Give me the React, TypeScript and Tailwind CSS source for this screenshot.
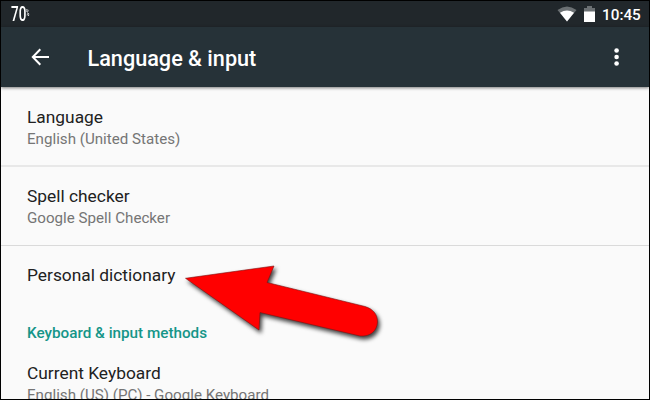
import React from 'react';

function Setting({ title, detail, className }: { title: string; detail: string; className: string }) {
  return (
    <div className={`flex shrink-0 flex-col pl-[26px] ${className}`}>
      <span className="text-[17.35px] leading-[22px] text-[#212121]">{title}</span>
      <span className="text-[15.15px] leading-[23px] text-[#757575]">{detail}</span>
    </div>
  );
}

export default function App() {
  return (
    <div className="relative flex h-[400px] w-[650px] flex-col overflow-hidden border border-black bg-[#fafafa] font-['Roboto',sans-serif] whitespace-nowrap">
      <div className="flex h-[26px] shrink-0 items-center bg-[#21272b] pl-[10px] pr-[8px] text-white">
        <div className="flex items-center">
          <span className="inline-block w-[15px] origin-left scale-x-[0.64] text-[21px] font-medium leading-[26px]">70</span>
          <span className="inline-block w-1 origin-left scale-x-[0.5] text-[9px] font-medium">%</span>
        </div>
        <svg className="ml-auto" width="20" height="16" viewBox="0 0 20 16">
          <path d="M0.5 4Q10 -3 19.5 4L10 15.5Z" fill="#6b7073" />
          <path d="M3 6.8Q10 2.2 17 6.8L10 15.5Z" fill="#fff" />
        </svg>
        <svg className="ml-[7px]" width="11" height="16" viewBox="0 0 11 16">
          <path d="M0 2h3V0h5v2h3v4H0z" fill="#6b7073" />
          <path d="M0 5.5h11V16H0z" fill="#fff" />
        </svg>
        <span className="ml-[7px] w-[39px] pt-px text-[15.3px] font-medium leading-[26px]">10:45</span>
      </div>
      <header className="relative flex h-[60px] shrink-0 items-center bg-[#263238] pl-[30px] pr-[29px] text-white shadow-[0_1px_3px_rgba(0,0,0,0.5)]">
        <svg width="18" height="18" viewBox="0 0 18 18" fill="none" stroke="white" strokeWidth="2">
          <path d="M9.3 1.2L1.8 9l7.5 7.8M2 9h16" />
        </svg>
        <h1 className="ml-[38.5px] pt-[3px] text-[21.65px] font-medium leading-[28px]">Language &amp; input</h1>
        <svg className="ml-auto" width="6" height="18" viewBox="0 0 6 18" fill="white">
          <circle cx="2.6" cy="2.5" r="2.3" />
          <circle cx="2.6" cy="9" r="2.3" />
          <circle cx="2.6" cy="15.5" r="2.3" />
        </svg>
      </header>
      <main className="flex flex-col">
        <Setting title="Language" detail="English (United States)" className="h-[80px] border-b-2 border-[#e8e8e8] pt-[19px]" />
        <Setting title="Spell checker" detail="Google Spell Checker" className="h-[79px] border-b border-[#dadada] pt-[18px]" />
        <div className="h-[76px] shrink-0 pl-[26px] pt-[18px] text-[17.35px] leading-[22px] text-[#212121]">Personal dictionary</div>
        <h2 className="h-[40px] shrink-0 pl-[26px] text-[15.25px] font-medium leading-[22px] text-[#159588]">Keyboard &amp; input methods</h2>
        <Setting title="Current Keyboard" detail="English (US) (PC) - Google Keyboard" className="" />
      </main>
      <svg className="absolute left-[169px] top-[244px] drop-shadow-[2px_3px_2px_rgba(0,0,0,0.75)]" width="230" height="110" viewBox="0 0 230 110">
        <path d="M15.5 33.3L104 21L97 37.5L195 61.5C203 64 207.5 69 207.5 77C207 86 200 92 190 91L90 67.5L89 85Z" fill="#f00" stroke="#801010" strokeWidth=".6" />
      </svg>
    </div>
  );
}
